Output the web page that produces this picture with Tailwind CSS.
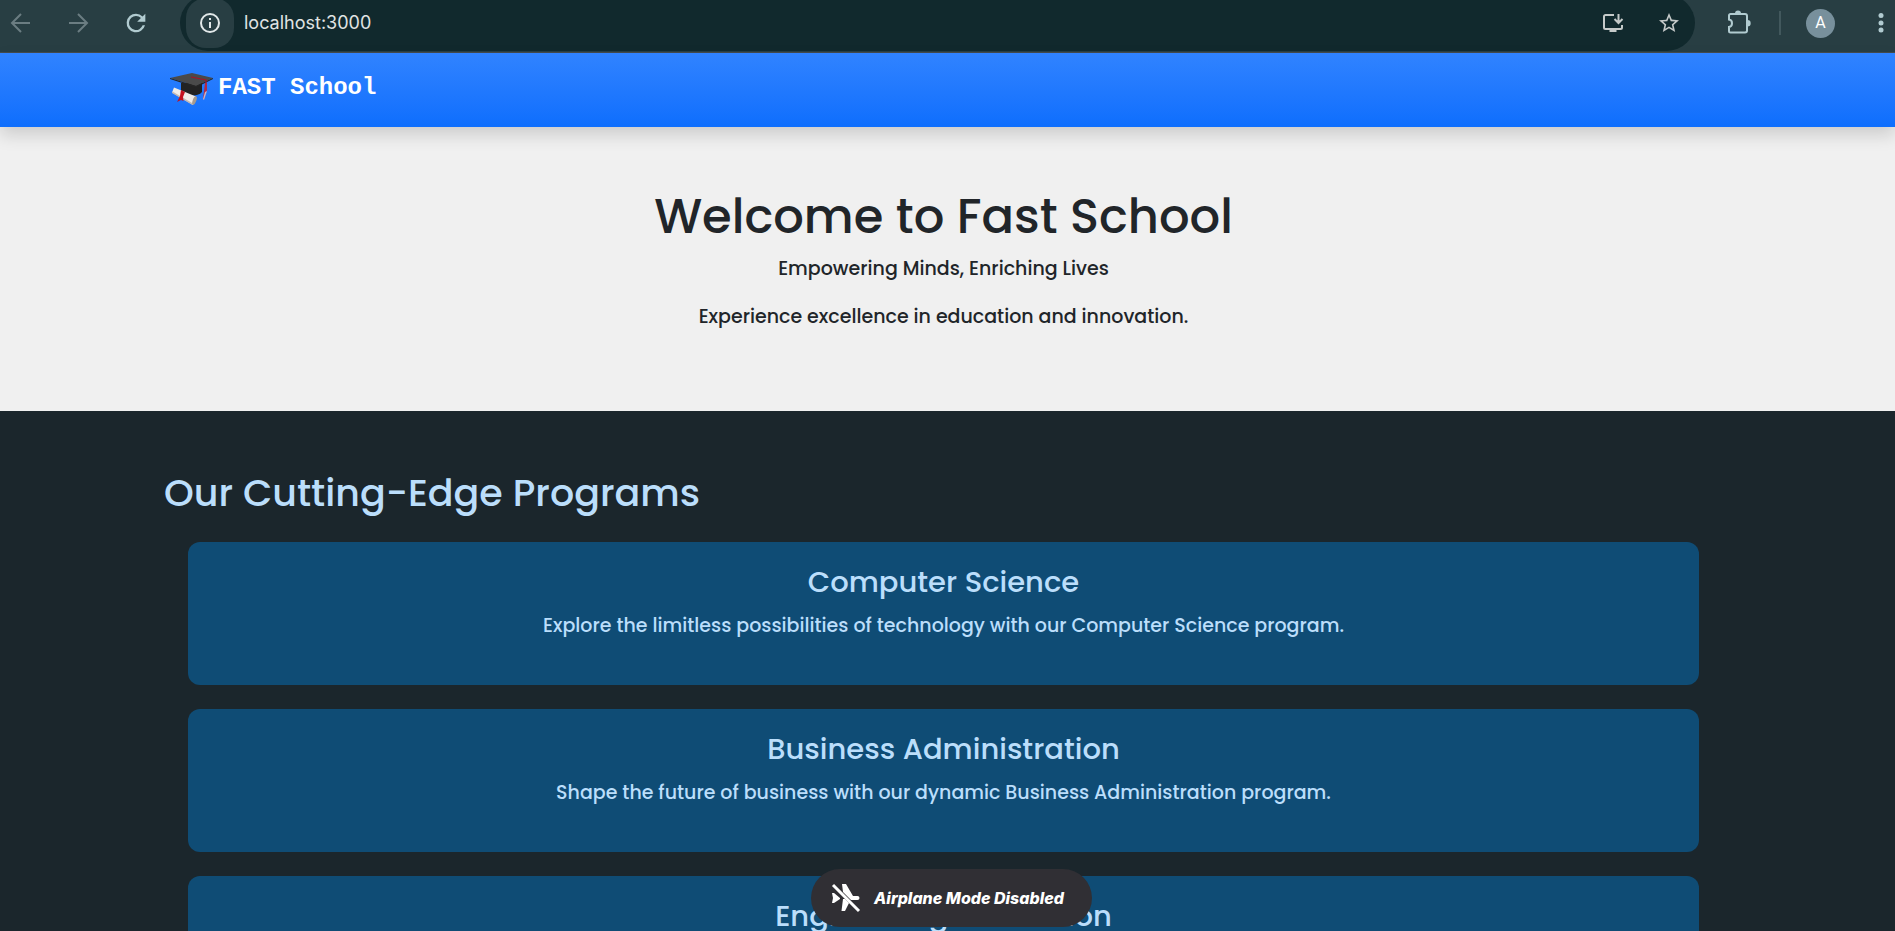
<!DOCTYPE html>
<html lang="en">
<head>
<meta charset="utf-8">
<title>FAST School</title>
<script src="https://cdn.jsdelivr.net/npm/@tailwindcss/browser@4"></script>
</head>
<body class="h-screen overflow-hidden flex flex-col bg-[#1b262c] font-['Poppins','Inter',sans-serif] font-medium">

<header class="h-[53px] shrink-0 overflow-hidden bg-[#283e43] border-b border-[#454b4c]">
  <div class="h-14 -mt-[5px] flex items-center text-[#b1cbd0]">
    <button aria-label="Back" class="ml-2 text-[#6b7d82]"><svg class="size-6" viewBox="0 0 24 24" fill="none" stroke="currentColor" stroke-width="2"><path d="M22 12H4M13 3l-9 9 9 9"/></svg></button>
    <button aria-label="Forward" class="ml-9 text-[#6b7d82]"><svg class="size-6" viewBox="0 0 24 24" fill="none" stroke="currentColor" stroke-width="2"><path d="M1 12h18M10 3l9 9-9 9"/></svg></button>
    <button aria-label="Reload" class="ml-[30px]"><svg class="size-7" viewBox="0 0 24 24" fill="currentColor"><path d="M17.650 6.350A7.960 7.960 0 0 0 12 4a8 8 0 1 0 7.730 10h-2.080A6 6 0 1 1 12 6c1.660 0 3.140.690 4.220 1.780L13 11h7V4z"/></svg></button>
    <div class="ml-[30px] h-14 flex-1 flex items-center rounded-full bg-[#11292d] pl-1.5 pr-3">
      <button aria-label="Site information" class="w-12 h-[50px] rounded-[20px] bg-[#283e43] flex items-center justify-center text-[#e2e8e9]"><svg class="size-6" viewBox="0 0 24 24" fill="currentColor"><path d="M11 17h2v-6h-2zm1-15a10 10 0 1 0 0 20 10 10 0 0 0 0-20m0 18a8 8 0 1 1 0-16 8 8 0 0 1 0 16M11 9h2V7h-2z"/></svg></button>
      <input aria-label="Address" value="localhost:3000" class="ml-2.5 flex-1 min-w-0 bg-transparent outline-none font-['Inter'] font-normal text-lg text-[#e0e4e4]">
      <button aria-label="Install app" class="text-[#c5cac9]"><svg class="size-6" viewBox="0 0 24 24" fill="none" stroke="currentColor" stroke-width="2"><path d="M13 4H4.500a1.500 1.500 0 0 0-1.500 1.500v11A1.500 1.500 0 0 0 4.500 18h15a1.500 1.500 0 0 0 1.500-1.500V14M17.500 3v8M13.500 8l4 4 4-4"/><path d="M8.500 19.500h7" stroke-width="3"/></svg></button>
      <button aria-label="Bookmark" class="ml-8 mr-0.5 text-[#c5cac9]"><svg class="size-6" viewBox="0 0 24 24" fill="currentColor"><path d="m22 9.240-7.190-.62L12 2 9.190 8.630 2 9.240l5.460 4.730L5.820 21 12 17.270 18.180 21l-1.630-7.030zM12 15.400l-3.760 2.270 1-4.280-3.320-2.880 4.380-.38L12 6.100l1.710 4.040 4.380.38-3.320 2.880 1 4.280z"/></svg></button>
    </div>
    <button aria-label="Extensions" class="ml-[30px]"><svg class="size-7" viewBox="0 0 28 28"><path d="M5.500 5H20a2 2 0 0 1 2 2v14.500a2 2 0 0 1-2 2H5.500a1.500 1.500 0 0 1-1.500-1.500v-4c4-.5 4-7 0-7.500v-4A1.500 1.500 0 0 1 5.500 5z" fill="none" stroke="currentColor" stroke-width="2"/><path d="M10 4.500a3 3 0 0 1 6 0zM22.500 11a3.200 3.200 0 0 1 0 6.400z" fill="currentColor"/></svg></button>
    <div class="ml-[26px] w-0.5 h-6 bg-[#42585d]"></div>
    <button aria-label="Profile" class="ml-[25px] size-[29px] rounded-full bg-[#78909c] text-white font-['Roboto'] font-normal text-base">A</button>
    <button aria-label="Menu" class="ml-8"><svg class="size-7" viewBox="0 0 28 28" fill="currentColor"><circle cx="14" cy="6.500" r="2.500"/><circle cx="14" cy="14" r="2.500"/><circle cx="14" cy="21" r="2.500"/></svg></button>
  </div>
</header>

<nav class="relative z-10 h-[74px] shrink-0 bg-linear-to-b from-[#3083ff] to-[#0d6efd] shadow-[0_8px_16px_rgba(0,0,0,0.15)]">
  <a href="#" class="ml-[170px] h-[70px] w-fit flex items-center gap-1 text-white font-['Liberation_Mono',monospace] font-bold text-2xl">
    <svg class="w-11 h-9 mt-1" viewBox="0 0 44 36">
      <path d="M11 11v9c4 5 17 5 21 0v-9z" fill="#222"/>
      <path d="M0 6 22 1l21 5-17 8z" fill="#4a4a4a"/>
      <path d="m0 6 26 8 17-8v1L26 15.500 0 7z" fill="#252525"/>
      <path d="m21 5 15 3v8" fill="none" stroke="#a51528" stroke-width="1.200"/>
      <path d="m35 11 2 0 0 7-3 9-1 0z" fill="#b02a45"/>
      <path d="m35 20-2 7 1 1 3-9z" fill="#c9b3c4"/>
      <path d="M4 15.500 26 24.500 23 33 2 20.500z" fill="#f0ede9"/>
      <path d="m2.500 19.500 20.500 12-.5 1.500L2 21z" fill="#c3b9b3"/>
      <path d="m11 18 4 2-2 5 .5 4-2.500-1-4 2 3-6z" fill="#c4121f"/>
      <ellipse cx="24.500" cy="28.500" rx="1.800" ry="4.500" transform="rotate(20 24.500 28.500)" fill="#a69a8d"/>
    </svg>
    <span>FAST School</span>
  </a>
</nav>

<section class="h-[284px] shrink-0 bg-[#f0f0f0] pt-[60px] pr-2 text-center text-[#212529]">
  <h1 class="text-5xl leading-[60px]">Welcome to Fast School</h1>
  <p class="mt-1.5 text-[19px] leading-8">Empowering Minds, Enriching Lives</p>
  <p class="mt-4 text-[19px] leading-8">Experience excellence in education and innovation.</p>
</section>

<main class="pl-[164px] pr-[172px] pt-14 text-[#bbdefb]">
  <h2 class="text-[38px] leading-[51px]">Our Cutting-Edge Programs</h2>
  <div class="mt-6 mx-6 flex flex-col gap-6 text-center">
    <article class="h-[143px] shrink-0 rounded-xl bg-[#0f4c75] pt-6">
      <h3 class="text-[29px] leading-8">Computer Science</h3>
      <p class="mt-3 text-[19px] leading-8">Explore the limitless possibilities of technology with our Computer Science program.</p>
    </article>
    <article class="h-[143px] shrink-0 rounded-xl bg-[#0f4c75] pt-6">
      <h3 class="text-[29px] leading-8">Business Administration</h3>
      <p class="mt-3 text-[19px] leading-8">Shape the future of business with our dynamic Business Administration program.</p>
    </article>
    <article class="h-[143px] shrink-0 rounded-xl bg-[#0f4c75] pt-6">
      <h3 class="text-[29px] leading-8">Engineering Innovation</h3>
    </article>
  </div>
</main>

<div role="status" class="fixed z-20 bottom-1 left-[811px] w-[281px] h-[58px] rounded-full bg-[#302f34] flex items-center gap-[11px] pl-5 text-white font-['Inter'] font-extrabold italic text-base whitespace-nowrap">
  <svg class="size-8 shrink-0" viewBox="0 0 32 32" fill="#fff">
    <path d="M11 2h4l7 12h4.500a2 2 0 0 1 0 4H20l-8-8z"/>
    <path d="M1 11h2l6 5v1l-6 4H1l1-5z"/>
    <path d="M12 17h2l4 4-4 8h-3.500z"/>
    <path d="m2 3 26 26" stroke="#fff" stroke-width="3"/>
  </svg>
  <span>Airplane Mode Disabled</span>
</div>
</body>
</html>
